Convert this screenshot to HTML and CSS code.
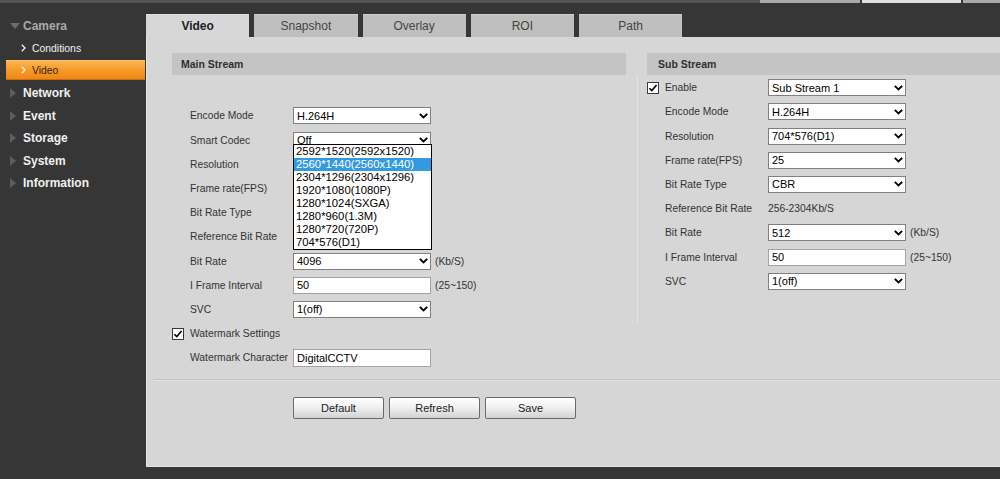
FILE: index.html
```html
<!DOCTYPE html>
<html>
<head>
<meta charset="utf-8">
<link rel="stylesheet" href="styles.css">
</head>
<body>
<div class="topbar"><div class="tb-fill"></div><div class="tb-box tb-a"></div><div class="tb-box tb-b"></div><div class="tb-box tb-c"></div></div>
<div class="app">
  <nav class="sidebar">
    <div class="nav-group"><span class="tri-down"></span>Camera</div>
    <div class="nav-sub"><svg class="chev" width="5" height="8" viewBox="0 0 5 8"><path d="M0.8 0.8L4 4L0.8 7.2" fill="none" stroke="#f2f2f2" stroke-width="1.3"/></svg>Conditions</div>
    <div class="nav-sub active"><svg class="chev" width="5" height="8" viewBox="0 0 5 8"><path d="M0.8 0.8L4 4L0.8 7.2" fill="none" stroke="#fff3e0" stroke-width="1.3"/></svg>Video</div>
    <div class="nav-item first"><span class="tri-right"></span>Network</div>
    <div class="nav-item"><span class="tri-right"></span>Event</div>
    <div class="nav-item"><span class="tri-right"></span>Storage</div>
    <div class="nav-item"><span class="tri-right"></span>System</div>
    <div class="nav-item"><span class="tri-right"></span>Information</div>
  </nav>
  <main class="content">
    <div class="tabs">
      <div class="tab active">Video</div>
      <div class="tab">Snapshot</div>
      <div class="tab">Overlay</div>
      <div class="tab">ROI</div>
      <div class="tab">Path</div>
    </div>
    <div class="panel">
      <div class="streams">
        <section class="stream main-stream">
          <div class="stream-head head-main">Main Stream</div>
          <div class="rows rows-main">
            <div class="row"><span class="lead"></span><span class="lbl">Encode Mode</span><div class="ctl sel">H.264H<svg class="dd" width="9" height="6" viewBox="0 0 9 6"><path d="M0.8 0.8L4.5 4.5L8.2 0.8" fill="none" stroke="#000" stroke-width="1.9"/></svg></div></div>
            <div class="row"><span class="lead"></span><span class="lbl">Smart Codec</span>
              <div class="ctl sel anchor">Off<svg class="dd" width="9" height="6" viewBox="0 0 9 6"><path d="M0.8 0.8L4.5 4.5L8.2 0.8" fill="none" stroke="#000" stroke-width="1.9"/></svg>
                <ul class="dropdown">
                  <li>2592*1520(2592x1520)</li>
                  <li class="hl">2560*1440(2560x1440)</li>
                  <li>2304*1296(2304x1296)</li>
                  <li>1920*1080(1080P)</li>
                  <li>1280*1024(SXGA)</li>
                  <li>1280*960(1.3M)</li>
                  <li>1280*720(720P)</li>
                  <li>704*576(D1)</li>
                </ul>
              </div>
            </div>
            <div class="row"><span class="lead"></span><span class="lbl">Resolution</span><div class="ctl sel"></div></div>
            <div class="row"><span class="lead"></span><span class="lbl">Frame rate(FPS)</span><div class="ctl sel"></div></div>
            <div class="row"><span class="lead"></span><span class="lbl">Bit Rate Type</span><div class="ctl sel"></div></div>
            <div class="row"><span class="lead"></span><span class="lbl">Reference Bit Rate</span></div>
            <div class="row"><span class="lead"></span><span class="lbl">Bit Rate</span><div class="ctl sel">4096<svg class="dd" width="9" height="6" viewBox="0 0 9 6"><path d="M0.8 0.8L4.5 4.5L8.2 0.8" fill="none" stroke="#000" stroke-width="1.9"/></svg></div><span class="unit">(Kb/S)</span></div>
            <div class="row"><span class="lead"></span><span class="lbl">I Frame Interval</span><div class="ctl inp">50</div><span class="unit">(25~150)</span></div>
            <div class="row"><span class="lead"></span><span class="lbl">SVC</span><div class="ctl sel">1(off)<svg class="dd" width="9" height="6" viewBox="0 0 9 6"><path d="M0.8 0.8L4.5 4.5L8.2 0.8" fill="none" stroke="#000" stroke-width="1.9"/></svg></div></div>
            <div class="row"><span class="lead"><svg width="12" height="12" viewBox="0 0 12 12"><rect x="0.5" y="0.5" width="11" height="11" fill="#fff" stroke="#3a3a3a"/><path d="M2.4 6.2L4.8 8.6L9.6 3" fill="none" stroke="#000" stroke-width="1.6"/></svg></span><span class="lbl wide">Watermark Settings</span></div>
            <div class="row"><span class="lead"></span><span class="lbl">Watermark Character</span><div class="ctl inp wm">DigitalCCTV</div></div>
          </div>
        </section>
        <div class="divider"></div>
        <section class="stream sub-stream">
          <div class="stream-head head-sub">Sub Stream</div>
          <div class="rows rows-sub">
            <div class="row"><span class="lead"><svg width="12" height="12" viewBox="0 0 12 12"><rect x="0.5" y="0.5" width="11" height="11" fill="#fff" stroke="#3a3a3a"/><path d="M2.4 6.2L4.8 8.6L9.6 3" fill="none" stroke="#000" stroke-width="1.6"/></svg></span><span class="lbl">Enable</span><div class="ctl sel">Sub Stream 1<svg class="dd" width="9" height="6" viewBox="0 0 9 6"><path d="M0.8 0.8L4.5 4.5L8.2 0.8" fill="none" stroke="#000" stroke-width="1.9"/></svg></div></div>
            <div class="row"><span class="lead"></span><span class="lbl">Encode Mode</span><div class="ctl sel">H.264H<svg class="dd" width="9" height="6" viewBox="0 0 9 6"><path d="M0.8 0.8L4.5 4.5L8.2 0.8" fill="none" stroke="#000" stroke-width="1.9"/></svg></div></div>
            <div class="row"><span class="lead"></span><span class="lbl">Resolution</span><div class="ctl sel">704*576(D1)<svg class="dd" width="9" height="6" viewBox="0 0 9 6"><path d="M0.8 0.8L4.5 4.5L8.2 0.8" fill="none" stroke="#000" stroke-width="1.9"/></svg></div></div>
            <div class="row"><span class="lead"></span><span class="lbl">Frame rate(FPS)</span><div class="ctl sel">25<svg class="dd" width="9" height="6" viewBox="0 0 9 6"><path d="M0.8 0.8L4.5 4.5L8.2 0.8" fill="none" stroke="#000" stroke-width="1.9"/></svg></div></div>
            <div class="row"><span class="lead"></span><span class="lbl">Bit Rate Type</span><div class="ctl sel">CBR<svg class="dd" width="9" height="6" viewBox="0 0 9 6"><path d="M0.8 0.8L4.5 4.5L8.2 0.8" fill="none" stroke="#000" stroke-width="1.9"/></svg></div></div>
            <div class="row"><span class="lead"></span><span class="lbl">Reference Bit Rate</span><span class="val">256-2304Kb/S</span></div>
            <div class="row"><span class="lead"></span><span class="lbl">Bit Rate</span><div class="ctl sel">512<svg class="dd" width="9" height="6" viewBox="0 0 9 6"><path d="M0.8 0.8L4.5 4.5L8.2 0.8" fill="none" stroke="#000" stroke-width="1.9"/></svg></div><span class="unit">(Kb/S)</span></div>
            <div class="row"><span class="lead"></span><span class="lbl">I Frame Interval</span><div class="ctl inp">50</div><span class="unit">(25~150)</span></div>
            <div class="row"><span class="lead"></span><span class="lbl">SVC</span><div class="ctl sel">1(off)<svg class="dd" width="9" height="6" viewBox="0 0 9 6"><path d="M0.8 0.8L4.5 4.5L8.2 0.8" fill="none" stroke="#000" stroke-width="1.9"/></svg></div></div>
          </div>
        </section>
      </div>
      <div class="sep"></div>
      <div class="buttons">
        <button class="btn">Default</button>
        <button class="btn">Refresh</button>
        <button class="btn">Save</button>
      </div>
    </div>
  </main>
</div>
</body>
</html>
```

FILE: styles.css
```css
html, body {
  margin: 0;
  padding: 0;
}
body {
  background: #363636;
  font-family: "Liberation Sans", Arial, sans-serif;
  height: 479px;
  overflow: hidden;
}

/* top strip */
.topbar {
  display: flex;
  height: 3px;
}
.tb-fill { flex: 1; background: #545454; }
.tb-box { height: 3px; }
.tb-a { width: 100px; background: #a9a9a9; margin-right: 2px; }
.tb-b { width: 99px; background: #dedede; margin-right: 2px; }
.tb-c { width: 37px; background: #a9a9a9; }

.app {
  display: flex;
  height: 476px;
}

/* sidebar */
.sidebar {
  width: 146px;
  flex: none;
  padding-top: 12px;
  box-sizing: border-box;
}
.nav-group {
  height: 22px;
  display: flex;
  align-items: center;
  padding-left: 10px;
  font-weight: bold;
  font-size: 12px;
  color: #a9a9a9;
}
.tri-down {
  width: 0;
  height: 0;
  border-left: 5px solid transparent;
  border-right: 5px solid transparent;
  border-top: 6px solid #6b6b6b;
  margin-right: 3px;
}
.nav-sub {
  height: 22px;
  display: flex;
  align-items: center;
  padding-left: 21px;
  font-size: 10.4px;
  color: #f0f0f0;
}
.nav-sub .chev { margin-right: 6px; }
.nav-sub.active {
  height: 20px;
  box-sizing: border-box;
  margin: 1px 1px 0 6px;
  padding-left: 15px;
  background: linear-gradient(#fcb650 0%, #f79d2c 45%, #ef8614 100%);
  border-top: 1px solid #fdc46a;
  border-bottom: 1px solid #c96c0a;
  color: #3b2410;
}
.nav-item {
  height: 22.5px;
  display: flex;
  align-items: center;
  padding-left: 10px;
  font-weight: bold;
  font-size: 12px;
  color: #f0f0f0;
}
.nav-item.first { margin-top: 1.75px; }
.tri-right {
  width: 0;
  height: 0;
  border-top: 5px solid transparent;
  border-bottom: 5px solid transparent;
  border-left: 6px solid #5d5d5d;
  margin-right: 7px;
}

/* content */
.content {
  flex: 1;
  display: flex;
  flex-direction: column;
  padding-top: 11px;
  min-width: 0;
}
.tabs {
  display: flex;
  gap: 5px;
  height: 23px;
}
.tab {
  width: 103.25px;
  height: 23px;
  box-sizing: border-box;
  display: flex;
  align-items: center;
  justify-content: center;
  background: #bfbfbf;
  border-top: 1px solid #cdcdcd;
  font-size: 12px;
  color: #444;
}
.tab.active {
  background: #d7d7d7;
  border-top-color: #e0e0e0;
  font-weight: bold;
  color: #1e1e1e;
}

.panel {
  height: 430px;
  box-sizing: border-box;
  background: #d6d6d6;
  border-left: 1px solid #e6e6e6;
  border-bottom: 1px solid #e4e4e4;
}
.streams {
  display: flex;
  height: 342px;
  box-sizing: border-box;
  padding: 16px 0 0 25px;
}
.stream.main-stream { width: 454px; flex: none; }
.divider {
  width: 1px;
  height: 248px;
  margin: 22px 0 0 11px;
  background: #e3e3e3;
  flex: none;
}
.stream.sub-stream {
  flex: 1;
  margin-left: 9px;
}
.stream-head {
  height: 22px;
  display: flex;
  align-items: center;
  background: #c4c4c4;
  font-weight: bold;
  font-size: 10.5px;
  color: #303030;
}
.head-main { padding-left: 9px; }
.head-sub { padding-left: 11px; }

.rows-main { margin-top: 28.9px; }
.rows-sub { margin-top: 0.6px; }
.rows { display: flex; flex-direction: column; }
.row {
  height: 24.2px;
  display: flex;
  align-items: center;
  font-size: 10.3px;
  color: #333;
}
.lead {
  width: 18px;
  flex: none;
  display: flex;
  align-items: center;
}
.lbl {
  width: 103px;
  flex: none;
  white-space: nowrap;
}
.lbl.wide { width: auto; }
.ctl {
  position: relative;
  width: 138px;
  height: 17px;
  box-sizing: border-box;
  flex: none;
  display: flex;
  align-items: center;
  padding-left: 3px;
  background: #fff;
  border: 1px solid #808080;
  font-size: 11px;
  color: #000;
  white-space: nowrap;
}
.ctl.inp { border-color: #a3a3a3; }
.ctl.wm { height: 18px; }
.dd {
  margin-left: auto;
  margin-right: 2px;
  flex: none;
}
.val {
  font-size: 10.3px;
  color: #333;
}
.unit {
  margin-left: 4px;
  font-size: 10.3px;
  color: #333;
}

/* open dropdown list */
.dropdown {
  position: absolute;
  top: 11px;
  left: -1px;
  width: 139px;
  box-sizing: border-box;
  margin: 0;
  padding: 0;
  list-style: none;
  background: #fff;
  border: 1px solid #000;
  z-index: 5;
}
.dropdown li {
  height: 13px;
  line-height: 13px;
  padding-left: 2px;
  font-size: 11.3px;
  color: #000;
}
.dropdown li.hl {
  background: #3399e0;
  color: #fff;
}

.sep {
  margin-left: 7px;
  height: 2px;
  box-sizing: border-box;
  border-top: 1px solid #c3c3c3;
  border-bottom: 1px solid #e2e2e2;
}
.buttons {
  display: flex;
  gap: 5px;
  padding: 16px 0 0 146px;
}
.btn {
  width: 91px;
  height: 22px;
  margin: 0;
  padding: 0;
  box-sizing: border-box;
  border: 1px solid #6b6b6b;
  border-radius: 2px;
  background: linear-gradient(#ffffff 0%, #f1f1f1 45%, #d2d2d2 100%);
  font-family: "Liberation Sans", Arial, sans-serif;
  font-size: 11px;
  color: #222;
}
```
